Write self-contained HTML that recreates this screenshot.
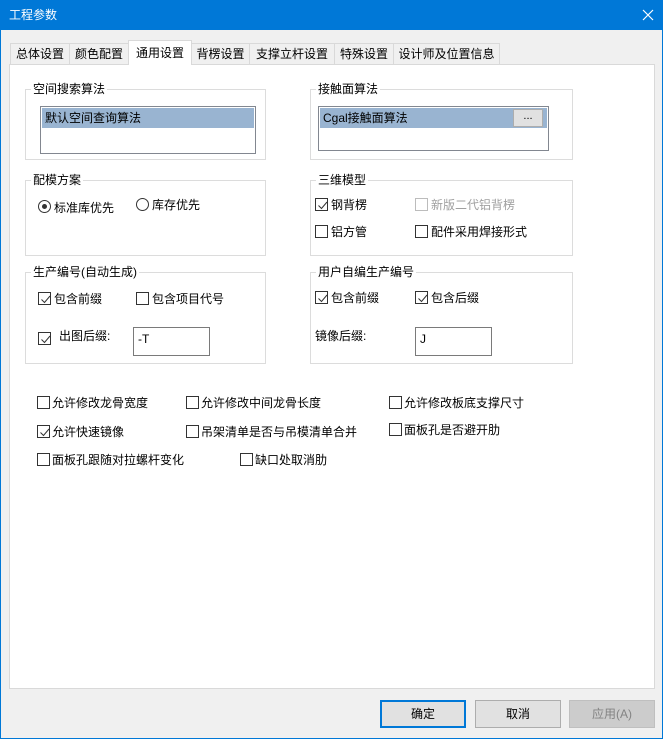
<!DOCTYPE html>
<html><head><meta charset="utf-8"><style>
*{margin:0;padding:0;box-sizing:border-box}
body{width:663px;height:739px;overflow:hidden;background:#f0f0f0;font-family:"Liberation Sans","Noto Sans CJK SC","Microsoft YaHei",sans-serif;font-size:12px;color:#000;position:relative}
.a{position:absolute;white-space:nowrap;line-height:14px}
.win{position:absolute;left:0;top:0;width:663px;height:739px;border:1px solid #0078d7}
.title{position:absolute;left:0;top:0;width:663px;height:30px;background:#0078d7;color:#fff;font-size:12px}
.tab{position:absolute;top:43px;height:22px;border:1px solid #d9d9d9;border-bottom:none;background:#f0f0f0;text-align:center;line-height:20px}
.tab.sel{top:40px;height:25px;background:#fff;z-index:2;line-height:24px}
.panel{position:absolute;left:9px;top:64px;width:646px;height:625px;background:#fff;border:1px solid #d9d9d9}
.grp{position:absolute;border:1px solid #dcdcdc}
.grp span{position:absolute;left:5px;top:-8px;background:#fff;padding:0 2px;line-height:14px}
.cb{position:absolute;width:13px;height:13px;border:1px solid #333;background:#fff}
.cb.dis{border-color:#bcbcbc}
.cb svg{position:absolute;left:1px;top:1px}
.rb{position:absolute;width:13px;height:13px;border:1px solid #333;border-radius:50%;background:#fff}
.rb i{position:absolute;left:3px;top:3px;width:5px;height:5px;border-radius:50%;background:#333}
.tb{position:absolute;border:1px solid #7a7a7a;background:#fff;padding:4px 0 0 4px;line-height:14px}
.btn{position:absolute;top:700px;width:86px;height:28px;border:1px solid #adadad;background:#e1e1e1;text-align:center;line-height:26px}
</style></head><body>
<div class="title"><div class="a" style="left:9px;top:8px;color:#fff">工程参数</div>
<svg style="position:absolute;left:642px;top:9px" width="12" height="12"><path d="M1 1L11 11M11 1L1 11" stroke="#fff" stroke-width="1.2"/></svg></div>
<div class="win"></div>

<div class="tab" style="left:10px;width:60px">总体设置</div>
<div class="tab" style="left:69px;width:60px">颜色配置</div>
<div class="tab sel" style="left:128px;width:64px">通用设置</div>
<div class="tab" style="left:191px;width:59px">背楞设置</div>
<div class="tab" style="left:249px;width:86px">支撑立杆设置</div>
<div class="tab" style="left:334px;width:60px">特殊设置</div>
<div class="tab" style="left:393px;width:107px">设计师及位置信息</div>
<div class="panel"></div>

<div class="grp" style="left:25px;top:89px;width:241px;height:71px"><span>空间搜索算法</span></div>
<div class="a" style="left:40px;top:106px;width:216px;height:48px;border:1px solid #828790;background:#fff"></div>
<div class="a" style="left:42px;top:108px;width:212px;height:20px;background:#99b4d1;padding:3px 0 0 3px">默认空间查询算法</div>

<div class="grp" style="left:310px;top:89px;width:263px;height:71px"><span>接触面算法</span></div>
<div class="a" style="left:318px;top:106px;width:231px;height:45px;border:1px solid #828790;background:#fff"></div>
<div class="a" style="left:320px;top:108px;width:227px;height:20px;background:#99b4d1;padding:3px 0 0 3px">Cgal接触面算法</div>
<div class="a" style="left:513px;top:109px;width:30px;height:18px;background:#e1e1e1;border:1px solid #adadad;text-align:center;line-height:12px;font-size:11px">...</div>

<div class="grp" style="left:25px;top:180px;width:241px;height:76px"><span>配模方案</span></div>
<div class="rb" style="left:38px;top:200px"><i></i></div><div class="a" style="left:54px;top:201px">标准库优先</div>
<div class="rb" style="left:136px;top:198px"></div><div class="a" style="left:152px;top:198px">库存优先</div>

<div class="grp" style="left:310px;top:180px;width:263px;height:76px"><span>三维模型</span></div>
<div class="cb" style="left:315px;top:198px"><svg width="11" height="11"><path d="M1.5 5.5L4.5 8.5L10 2" stroke="#333" fill="none" stroke-width="1"/></svg></div><div class="a" style="left:331px;top:198px">钢背楞</div>
<div class="cb dis" style="left:415px;top:198px"></div><div class="a" style="left:431px;top:198px;color:#a0a0a0">新版二代铝背楞</div>
<div class="cb" style="left:315px;top:225px"></div><div class="a" style="left:331px;top:225px">铝方管</div>
<div class="cb" style="left:415px;top:225px"></div><div class="a" style="left:431px;top:225px">配件采用焊接形式</div>

<div class="grp" style="left:25px;top:272px;width:241px;height:92px"><span>生产编号(自动生成)</span></div>
<div class="cb" style="left:38px;top:292px"><svg width="11" height="11"><path d="M1.5 5.5L4.5 8.5L10 2" stroke="#333" fill="none" stroke-width="1"/></svg></div><div class="a" style="left:54px;top:292px">包含前缀</div>
<div class="cb" style="left:136px;top:292px"></div><div class="a" style="left:152px;top:292px">包含项目代号</div>
<div class="cb" style="left:38px;top:332px"><svg width="11" height="11"><path d="M1.5 5.5L4.5 8.5L10 2" stroke="#333" fill="none" stroke-width="1"/></svg></div><div class="a" style="left:59px;top:329px">出图后缀:</div>
<div class="tb" style="left:133px;top:327px;width:77px;height:29px">-T</div>

<div class="grp" style="left:310px;top:272px;width:263px;height:92px"><span>用户自编生产编号</span></div>
<div class="cb" style="left:315px;top:291px"><svg width="11" height="11"><path d="M1.5 5.5L4.5 8.5L10 2" stroke="#333" fill="none" stroke-width="1"/></svg></div><div class="a" style="left:331px;top:291px">包含前缀</div>
<div class="cb" style="left:415px;top:291px"><svg width="11" height="11"><path d="M1.5 5.5L4.5 8.5L10 2" stroke="#333" fill="none" stroke-width="1"/></svg></div><div class="a" style="left:431px;top:291px">包含后缀</div>
<div class="a" style="left:315px;top:329px">镜像后缀:</div>
<div class="tb" style="left:415px;top:327px;width:77px;height:29px">J</div>

<div class="cb" style="left:37px;top:396px"></div><div class="a" style="left:52px;top:396px">允许修改龙骨宽度</div>
<div class="cb" style="left:186px;top:396px"></div><div class="a" style="left:201px;top:396px">允许修改中间龙骨长度</div>
<div class="cb" style="left:389px;top:396px"></div><div class="a" style="left:404px;top:396px">允许修改板底支撑尺寸</div>
<div class="cb" style="left:37px;top:425px"><svg width="11" height="11"><path d="M1.5 5.5L4.5 8.5L10 2" stroke="#333" fill="none" stroke-width="1"/></svg></div><div class="a" style="left:52px;top:425px">允许快速镜像</div>
<div class="cb" style="left:186px;top:425px"></div><div class="a" style="left:201px;top:425px">吊架清单是否与吊模清单合并</div>
<div class="cb" style="left:389px;top:423px"></div><div class="a" style="left:404px;top:423px">面板孔是否避开肋</div>
<div class="cb" style="left:37px;top:453px"></div><div class="a" style="left:52px;top:453px">面板孔跟随对拉螺杆变化</div>
<div class="cb" style="left:240px;top:453px"></div><div class="a" style="left:255px;top:453px">缺口处取消肋</div>

<div class="btn" style="left:380px;border:2px solid #0078d7;line-height:24px">确定</div>
<div class="btn" style="left:475px">取消</div>
<div class="btn" style="left:569px;background:#cccccc;border-color:#bfbfbf;color:#838383">应用(A)</div>
</body></html>
